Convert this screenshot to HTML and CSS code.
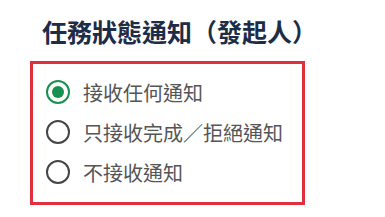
FILE: index.html
```html
<!DOCTYPE html>
<html lang="zh-Hant">
<head>
  <meta charset="UTF-8">
  <title>任務狀態通知</title>
  <link rel="stylesheet" href="styles.css">
</head>
<body>
  <div class="setting">
    <h2 class="setting-title">任務狀態通知（發起人）</h2>
    <div class="option-box">
      <label class="option">
        <input type="radio" name="notify" checked>
        <span class="radio"></span>
        <span class="option-text">接收任何通知</span>
      </label>
      <label class="option">
        <input type="radio" name="notify">
        <span class="radio"></span>
        <span class="option-text">只接收完成／拒絕通知</span>
      </label>
      <label class="option">
        <input type="radio" name="notify">
        <span class="radio"></span>
        <span class="option-text">不接收通知</span>
      </label>
    </div>
  </div>
</body>
</html>
```

FILE: styles.css
```css
body {
  margin: 0;
  background-color: #fff;
  font-family: "Noto Sans CJK TC", "Noto Sans", sans-serif;
}
.setting {
  padding: 13px 0 0 30px;
}
.setting-title {
  margin: 0 0 12px 12px;
  font-size: 25px;
  line-height: 36px;
  font-weight: bold;
  color: #1d2c47;
}
.option-box {
  width: 275px;
  height: 144px;
  box-sizing: border-box;
  border: 3px solid #e0303e;
  padding: 8px 0 0 13px;
}
.option {
  display: flex;
  align-items: center;
  height: 40px;
  cursor: pointer;
}
.option input {
  display: none;
}
.radio {
  width: 24px;
  height: 24px;
  box-sizing: border-box;
  border: 2.5px solid #444;
  border-radius: 50%;
  display: flex;
  align-items: center;
  justify-content: center;
  margin-right: 13px;
}
.option input:checked + .radio {
  border-color: #16914f;
}
.option input:checked + .radio::after {
  content: "";
  width: 12px;
  height: 12px;
  border-radius: 50%;
  background-color: #16914f;
}
.option-text {
  font-size: 20px;
  color: #555;
}
```
